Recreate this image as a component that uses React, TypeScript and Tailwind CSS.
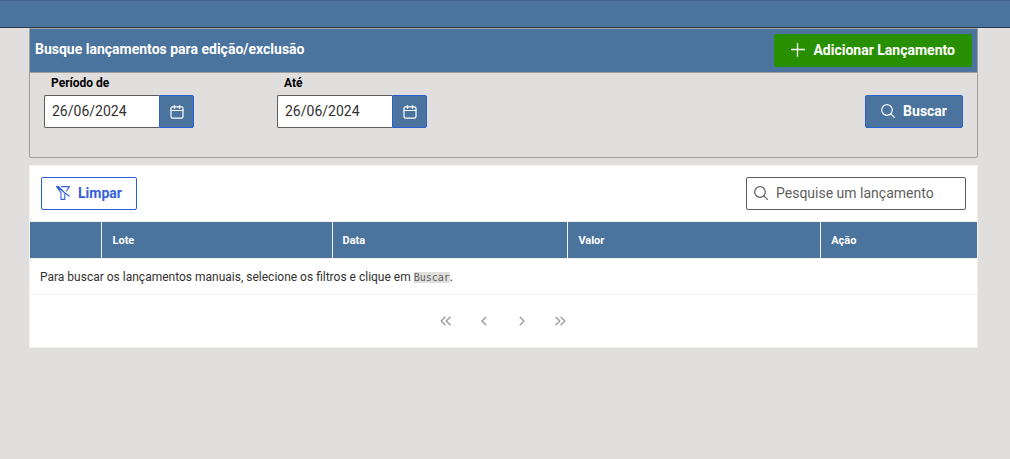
import { useState } from "react";
import type { ReactNode } from "react";

function Icon({ children, className, weight = 1 }: { children: ReactNode; className: string; weight?: number }) {
  return (
    <svg
      viewBox="0 0 14 14"
      className={className}
      fill="none"
      stroke="currentColor"
      strokeWidth={weight}
      strokeLinecap="round"
      strokeLinejoin="round"
      aria-hidden="true"
    >
      {children}
    </svg>
  );
}

const SearchIcon = ({ className }: { className: string }) => (
  <Icon className={className} weight={1.2}>
    <circle cx="6" cy="6" r="5.3" />
    <path d="M9.8 9.8 13.4 13.4" />
  </Icon>
);

const PlusIcon = () => (
  <Icon className="size-3.5" weight={1.3}>
    <path d="M6.5 .5v13M.5 6.5h13" />
  </Icon>
);

const CalendarIcon = () => (
  <Icon className="size-3.5" weight={1.2}>
    <rect x="1" y="1.8" width="12" height="11.4" rx="1.6" />
    <path d="M1 5.5h12M4.5.5v3M9.5.5v3" />
  </Icon>
);

const FilterSlashIcon = () => (
  <Icon className="size-3.5" weight={1.1}>
    <path d="M.6.6 13.4 10.2M5.5.6h7.9L10.4 5M.6.6 5 6.8v6.6h3.8V8.2M.6.6h2L8.8 7" />
  </Icon>
);

function DateField({ id, label, value }: { id: string; label: string; value: string }) {
  const [date, setDate] = useState(value);
  return (
    <div className="w-[233px]">
      <label htmlFor={id} className="block pl-[7px] text-xs leading-5 font-bold text-black">
        {label}
      </label>
      <div className="mt-0.5 flex h-[33px]">
        <input
          id={id}
          value={date}
          onChange={(e) => setDate(e.target.value)}
          className="w-[115px] rounded-l-xs border border-r-0 border-[#605e5c] bg-white px-[7px] pb-0.5 text-sm text-[#323130] outline-none"
        />
        <button
          type="button"
          aria-label={`Abrir calendário: ${label}`}
          className="flex w-[35px] items-center justify-center rounded-r-xs border border-[#2a60d6] bg-[#4a739e] text-white"
        >
          <CalendarIcon />
        </button>
      </div>
    </div>
  );
}

const pages = [
  { label: "Primeira página", d: "M6 3.2 2.2 7 6 10.8M11 3.2 7.2 7 11 10.8" },
  { label: "Página anterior", d: "M8.8 3.2 5 7 8.8 10.8" },
  { label: "Próxima página", d: "M5.2 3.2 9 7 5.2 10.8" },
  { label: "Última página", d: "M3 3.2 6.8 7 3 10.8M8 3.2 11.8 7 8 10.8" },
];

export default function App() {
  return (
    <div className="min-h-screen bg-[#e1dfdd] font-['Roboto',sans-serif] text-[#323130]">
      <header className="h-7 border-t border-b border-t-[#3f6288] border-b-[#2b3a4a] bg-[#4a739e]" />
      <main className="mr-8 ml-[29px]">
        <section className="rounded-b-xs border border-[#a19f9d] pb-[29px]">
          <div className="flex h-11 items-center justify-between border-b border-[#a19f9d] bg-[#4a739e] px-[5px]">
            <h1 className="pb-1 text-sm font-bold text-white">Busque lançamentos para edição/exclusão</h1>
            <button
              type="button"
              className="flex h-[33px] items-center gap-2 rounded-xs bg-[#288f00] px-[17px] pb-0.5 text-sm font-bold text-white"
            >
              <PlusIcon />
              Adicionar Lançamento
            </button>
          </div>
          <form className="flex items-end px-3.5" onSubmit={(e) => e.preventDefault()}>
            <DateField id="inicio" label="Período de" value="26/06/2024" />
            <DateField id="fim" label="Até" value="26/06/2024" />
            <button
              type="submit"
              className="ml-auto flex h-[33px] items-center gap-2 rounded-xs border border-[#2a60d6] bg-[#4a739e] px-[15px] pb-0.5 text-sm font-bold text-white"
            >
              <SearchIcon className="size-3.5" />
              Buscar
            </button>
          </form>
        </section>

        <section className="mt-[7px] border border-[#f3f2f1] bg-white">
          <div className="flex items-center justify-between px-[11px] py-[11px]">
            <button
              type="button"
              className="flex h-[33px] items-center gap-2 rounded-xs border border-[#2a60d6] bg-white px-3.5 pb-0.5 text-sm font-bold text-[#3460da]"
            >
              <FilterSlashIcon />
              Limpar
            </button>
            <label className="flex h-[33px] w-[220px] items-center gap-2 rounded-xs border border-[#605e5c] bg-white pr-2 pb-0.5 pl-[7px] text-[#605e5c]">
              <SearchIcon className="size-3.5 shrink-0" />
              <input
                type="search"
                aria-label="Pesquise um lançamento"
                placeholder="Pesquise um lançamento"
                className="w-full min-w-0 bg-transparent text-sm outline-none placeholder:text-[#605e5c]"
              />
            </label>
          </div>
          <table className="w-full table-fixed border-collapse text-left">
            <thead className="bg-[#4a739e] text-[11px] text-white">
              <tr className="h-[37px] border-t border-b border-[#f3f2f1]">
                <th aria-label="Seleção" className="w-[7.6%] border-r border-[#f3f2f1]" />
                <th className="w-[24.3%] border-r border-[#f3f2f1] px-2.5 pt-0.5 font-bold">Lote</th>
                <th className="w-[24.9%] border-r border-[#f3f2f1] px-2.5 pt-0.5 font-bold">Data</th>
                <th className="w-[26.7%] border-r border-[#f3f2f1] px-2.5 pt-0.5 font-bold">Valor</th>
                <th className="px-2.5 pt-0.5 font-bold">Ação</th>
              </tr>
            </thead>
            <tbody>
              <tr className="h-9 border-b border-[#f3f2f1]">
                <td colSpan={5} className="px-2.5 text-xs">
                  Para buscar os lançamentos manuais, selecione os filtros e clique em{" "}
                  <code className="bg-[#e1dfdd] font-['DejaVu_Sans_Mono',monospace] text-[10px] text-[#605e5c]">Buscar</code>.
                </td>
              </tr>
            </tbody>
          </table>
          <nav aria-label="Paginação" className="flex h-[52px] items-center justify-center pr-0.5 text-[#a19f9d]">
            {pages.map((page) => (
              <button key={page.label} type="button" disabled aria-label={page.label} className="flex w-[38px] justify-center">
                <Icon className="size-3.5" weight={1.5}>
                  <path d={page.d} />
                </Icon>
              </button>
            ))}
          </nav>
        </section>
      </main>
    </div>
  );
}
